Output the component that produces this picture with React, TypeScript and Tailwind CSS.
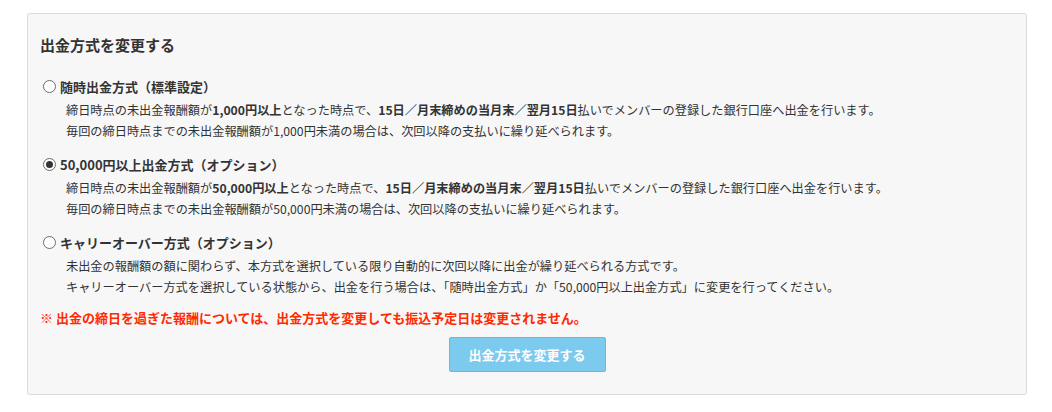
const font = { fontFamily: '"Noto Sans CJK JP", "Noto Sans", sans-serif' };

const Radio = ({ checked }: { checked: boolean }) => (
    <span className="flex h-[13px] w-[13px] shrink-0 items-center justify-center rounded-full border border-[#6b6b6b] bg-white">
        {checked && <span className="h-[7px] w-[7px] rounded-full bg-[#333]" />}
    </span>
);

const Option = ({
    label,
    checked,
    lines,
}: {
    label: string;
    checked: boolean;
    lines: React.ReactNode[];
}) => (
    <div className="mb-[12px]">
        <label className="flex h-[21px] items-center gap-[4px] pl-[3px] text-[13px] font-bold">
            <Radio checked={checked} />
            <span>{label}</span>
        </label>
        <div className="mt-[3px] pl-[26px] text-[12.2px] leading-[21px]">
            {lines.map((l, i) => (
                <p key={i}>{l}</p>
            ))}
        </div>
    </div>
);

export default function App() {
    return (
        <div className="min-h-[412px] bg-white px-[27px] pt-[13px] text-[#333]" style={font}>
            <div className="w-[1000px] rounded-[3px] border border-[#dcdcdc] bg-[#f7f7f7] pb-[22px] pl-[12px] pr-[12px] pt-[19px]">
                <h2 className="mb-[19px] text-[15px] font-bold leading-[24px]">出金方式を変更する</h2>
                <Option
                    label="随時出金方式（標準設定）"
                    checked={false}
                    lines={[
                        <>
                            締日時点の未出金報酬額が<b>1,000円以上</b>となった時点で、
                            <b>15日／月末締めの当月末／翌月15日</b>払いでメンバーの登録した銀行口座へ出金を行います。
                        </>,
                        "毎回の締日時点までの未出金報酬額が1,000円未満の場合は、次回以降の支払いに繰り延べられます。",
                    ]}
                />
                <Option
                    label="50,000円以上出金方式（オプション）"
                    checked={true}
                    lines={[
                        <>
                            締日時点の未出金報酬額が<b>50,000円以上</b>となった時点で、
                            <b>15日／月末締めの当月末／翌月15日</b>払いでメンバーの登録した銀行口座へ出金を行います。
                        </>,
                        "毎回の締日時点までの未出金報酬額が50,000円未満の場合は、次回以降の支払いに繰り延べられます。",
                    ]}
                />
                <Option
                    label="キャリーオーバー方式（オプション）"
                    checked={false}
                    lines={[
                        "未出金の報酬額の額に関わらず、本方式を選択している限り自動的に次回以降に出金が繰り延べられる方式です。",
                        "キャリーオーバー方式を選択している状態から、出金を行う場合は、「随時出金方式」か「50,000円以上出金方式」に変更を行ってください。",
                    ]}
                />
                <p className="-mt-[3px] text-[13px] font-bold leading-[21px] text-[#ff2a00]">
                    ※ 出金の締日を過ぎた報酬については、出金方式を変更しても振込予定日は変更されません。
                </p>
                <div className="mt-[9px] flex justify-center">
                    <button className="h-[35px] w-[157px] rounded-[2px] border border-[#6fb8dc] bg-[#7dcaef] text-[13px] font-bold text-white">
                        出金方式を変更する
                    </button>
                </div>
            </div>
        </div>
    );
}
